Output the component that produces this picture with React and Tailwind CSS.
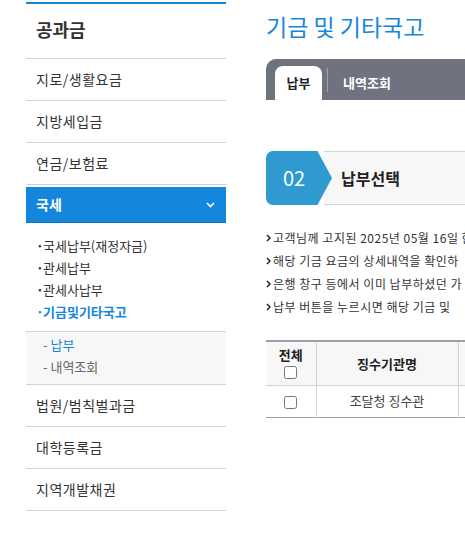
import React from 'react';

const font = { fontFamily: '"Noto Sans CJK KR", "Noto Sans", sans-serif' };

function Chevron() {
    return (
        <svg width="9" height="6" viewBox="0 0 9 6" className="block">
            <path d="M1 1 L4.5 4.5 L8 1" stroke="white" strokeWidth="1.6" fill="none" />
        </svg>
    );
}

function Arrow() {
    return (
        <svg width="5" height="8" viewBox="0 0 5 8" className="mr-[2px] flex-none">
            <path d="M1 1 L4 4 L1 7" stroke="#222" strokeWidth="1.5" fill="none" />
        </svg>
    );
}

function Sidebar() {
    const topItems = ['지로/생활요금', '지방세입금', '연금/보험료'];
    const subItems = ['국세납부(재정자금)', '관세납부', '관세사납부'];
    const bottomItems = ['법원/범칙벌과금', '대학등록금', '지역개발채권'];

    return (
        <div className="ml-[26px] mt-[2px] w-[200px] flex-none">
            <div className="border-t-2 border-[#1487dd]" />
            <div className="h-[55px] flex items-center pl-[10px] pb-[3px] border-b border-[#d0d4d9] text-[18px] font-bold text-[#333]">
                공과금
            </div>
            {topItems.map((label) => (
                <div key={label} className="h-[42px] flex items-center pl-[10px] pb-[1px] border-b border-[#d0d4d9] text-[14px] tracking-[0.5px] text-[#333]">
                    {label}
                </div>
            ))}
            <div className="mt-[2px] h-[36px] flex items-center justify-between pl-[10px] pr-[11px] bg-[#1487dd] border-b border-[#1077c6] text-[14px] font-bold text-white">
                <span>국세</span>
                <Chevron />
            </div>
            <ul className="pt-[12px] pb-[8px] pl-[10px] border-b border-[#d0d4d9]">
                {subItems.map((label) => (
                    <li key={label} className="h-[22px] flex items-center text-[13px] text-[#333]">
                        <span className="w-[7px] font-bold">·</span>
                        {label}
                    </li>
                ))}
                <li className="h-[22px] flex items-center text-[13px] font-bold text-[#1487dd]">
                    <span className="w-[7px]">·</span>
                    기금및기타국고
                </li>
            </ul>
            <ul className="pt-[2px] pb-[6px] pl-[17px] bg-[#f7f7f7] border-b border-[#d0d4d9]">
                <li className="h-[22px] flex items-center text-[13px] text-[#1487dd]">- 납부</li>
                <li className="h-[22px] flex items-center text-[13px] text-[#666]">- 내역조회</li>
            </ul>
            {bottomItems.map((label) => (
                <div key={label} className="h-[42px] flex items-center pl-[10px] pb-[1px] border-b border-[#d0d4d9] text-[14px] tracking-[0.5px] text-[#333]">
                    {label}
                </div>
            ))}
        </div>
    );
}

function Content() {
    const notes = [
        '고객님께 고지된 2025년 05월 16일 한',
        '해당 기금 요금의 상세내역을 확인하',
        '은행 창구 등에서 이미 납부하셨던 가',
        '납부 버튼을 누르시면 해당 기금 및',
    ];

    return (
        <div className="ml-[40px] w-[700px] flex-none">
            <h1 className="h-[52px] pt-[9px] text-[23px] leading-[34px] text-[#1487dd]">기금 및 기타국고</h1>
            <div className="mt-[7px] h-[41px] flex items-end pl-[9px] bg-[#6e737f] rounded-tl-[10px]">
                <div className="w-[47px] h-[34px] flex items-center justify-center bg-white rounded-t-[8px] text-[13px] font-bold text-[#222]">
                    납부
                </div>
                <div className="ml-[5px] mb-[8px] w-px h-[24px] bg-[#9ea2aa]" />
                <div className="h-[34px] flex items-center pl-[15px] text-[13px] font-bold text-white">
                    내역조회
                </div>
            </div>

            <div className="mt-[51px] h-[54px] flex">
                <div className="w-[66px] h-full flex items-center pl-[17px] bg-[#2e9ad0] rounded-l-[7px] [clip-path:polygon(0_0,78%_0,100%_50%,78%_100%,0_100%)] text-[20px] text-white">
                    02
                </div>
                <div className="flex-1 -ml-[8px] pl-[17px] flex items-center bg-[#f7f7f7] border-y border-[#d0d4d9] text-[16px] font-bold text-[#222]">
                    납부선택
                </div>
            </div>

            <ul className="mt-[21px]">
                {notes.map((t) => (
                    <li key={t} className="h-[23px] flex items-center text-[12px] tracking-[0.5px] text-[#333] whitespace-nowrap">
                        <Arrow />
                        {t}
                    </li>
                ))}
            </ul>

            <table className="mt-[22px] border-collapse border-t-2 border-b border-t-[#9aa0a8] border-b-[#9aa0a8] text-[13px]">
                <thead>
                    <tr className="h-[44px] bg-[#f7f7f7]">
                        <th className="w-[50px] border-r border-[#d0d4d9] font-bold text-[#222] align-middle">
                            <div className="flex flex-col items-center leading-[16px]">
                                <span>전체</span>
                                <input type="checkbox" className="mt-[3px] w-[13px] h-[13px]" />
                            </div>
                        </th>
                        <th className="w-[142px] border-r border-[#d0d4d9] font-bold text-[#222]">징수기관명</th>
                        <th className="w-[120px] border-r border-[#d0d4d9] font-bold text-[#222]">고지금액</th>
                        <th className="w-[120px] font-bold text-[#222]">납부기한</th>
                    </tr>
                </thead>
                <tbody>
                    <tr className="h-[32px] border-t border-[#d0d4d9]">
                        <td className="border-r border-[#d0d4d9] text-center">
                            <input type="checkbox" className="w-[13px] h-[13px] align-middle" />
                        </td>
                        <td className="border-r border-[#d0d4d9] text-center text-[#444]">조달청 징수관</td>
                        <td className="border-r border-[#d0d4d9] text-right pr-[8px] text-[#444]">12,500</td>
                        <td className="text-center text-[#444]">2025.05.31</td>
                    </tr>
                </tbody>
            </table>
        </div>
    );
}

export default function App() {
    return (
        <div className="w-[465px] h-[538px] overflow-hidden bg-white flex" style={font}>
            <Sidebar />
            <Content />
        </div>
    );
}
